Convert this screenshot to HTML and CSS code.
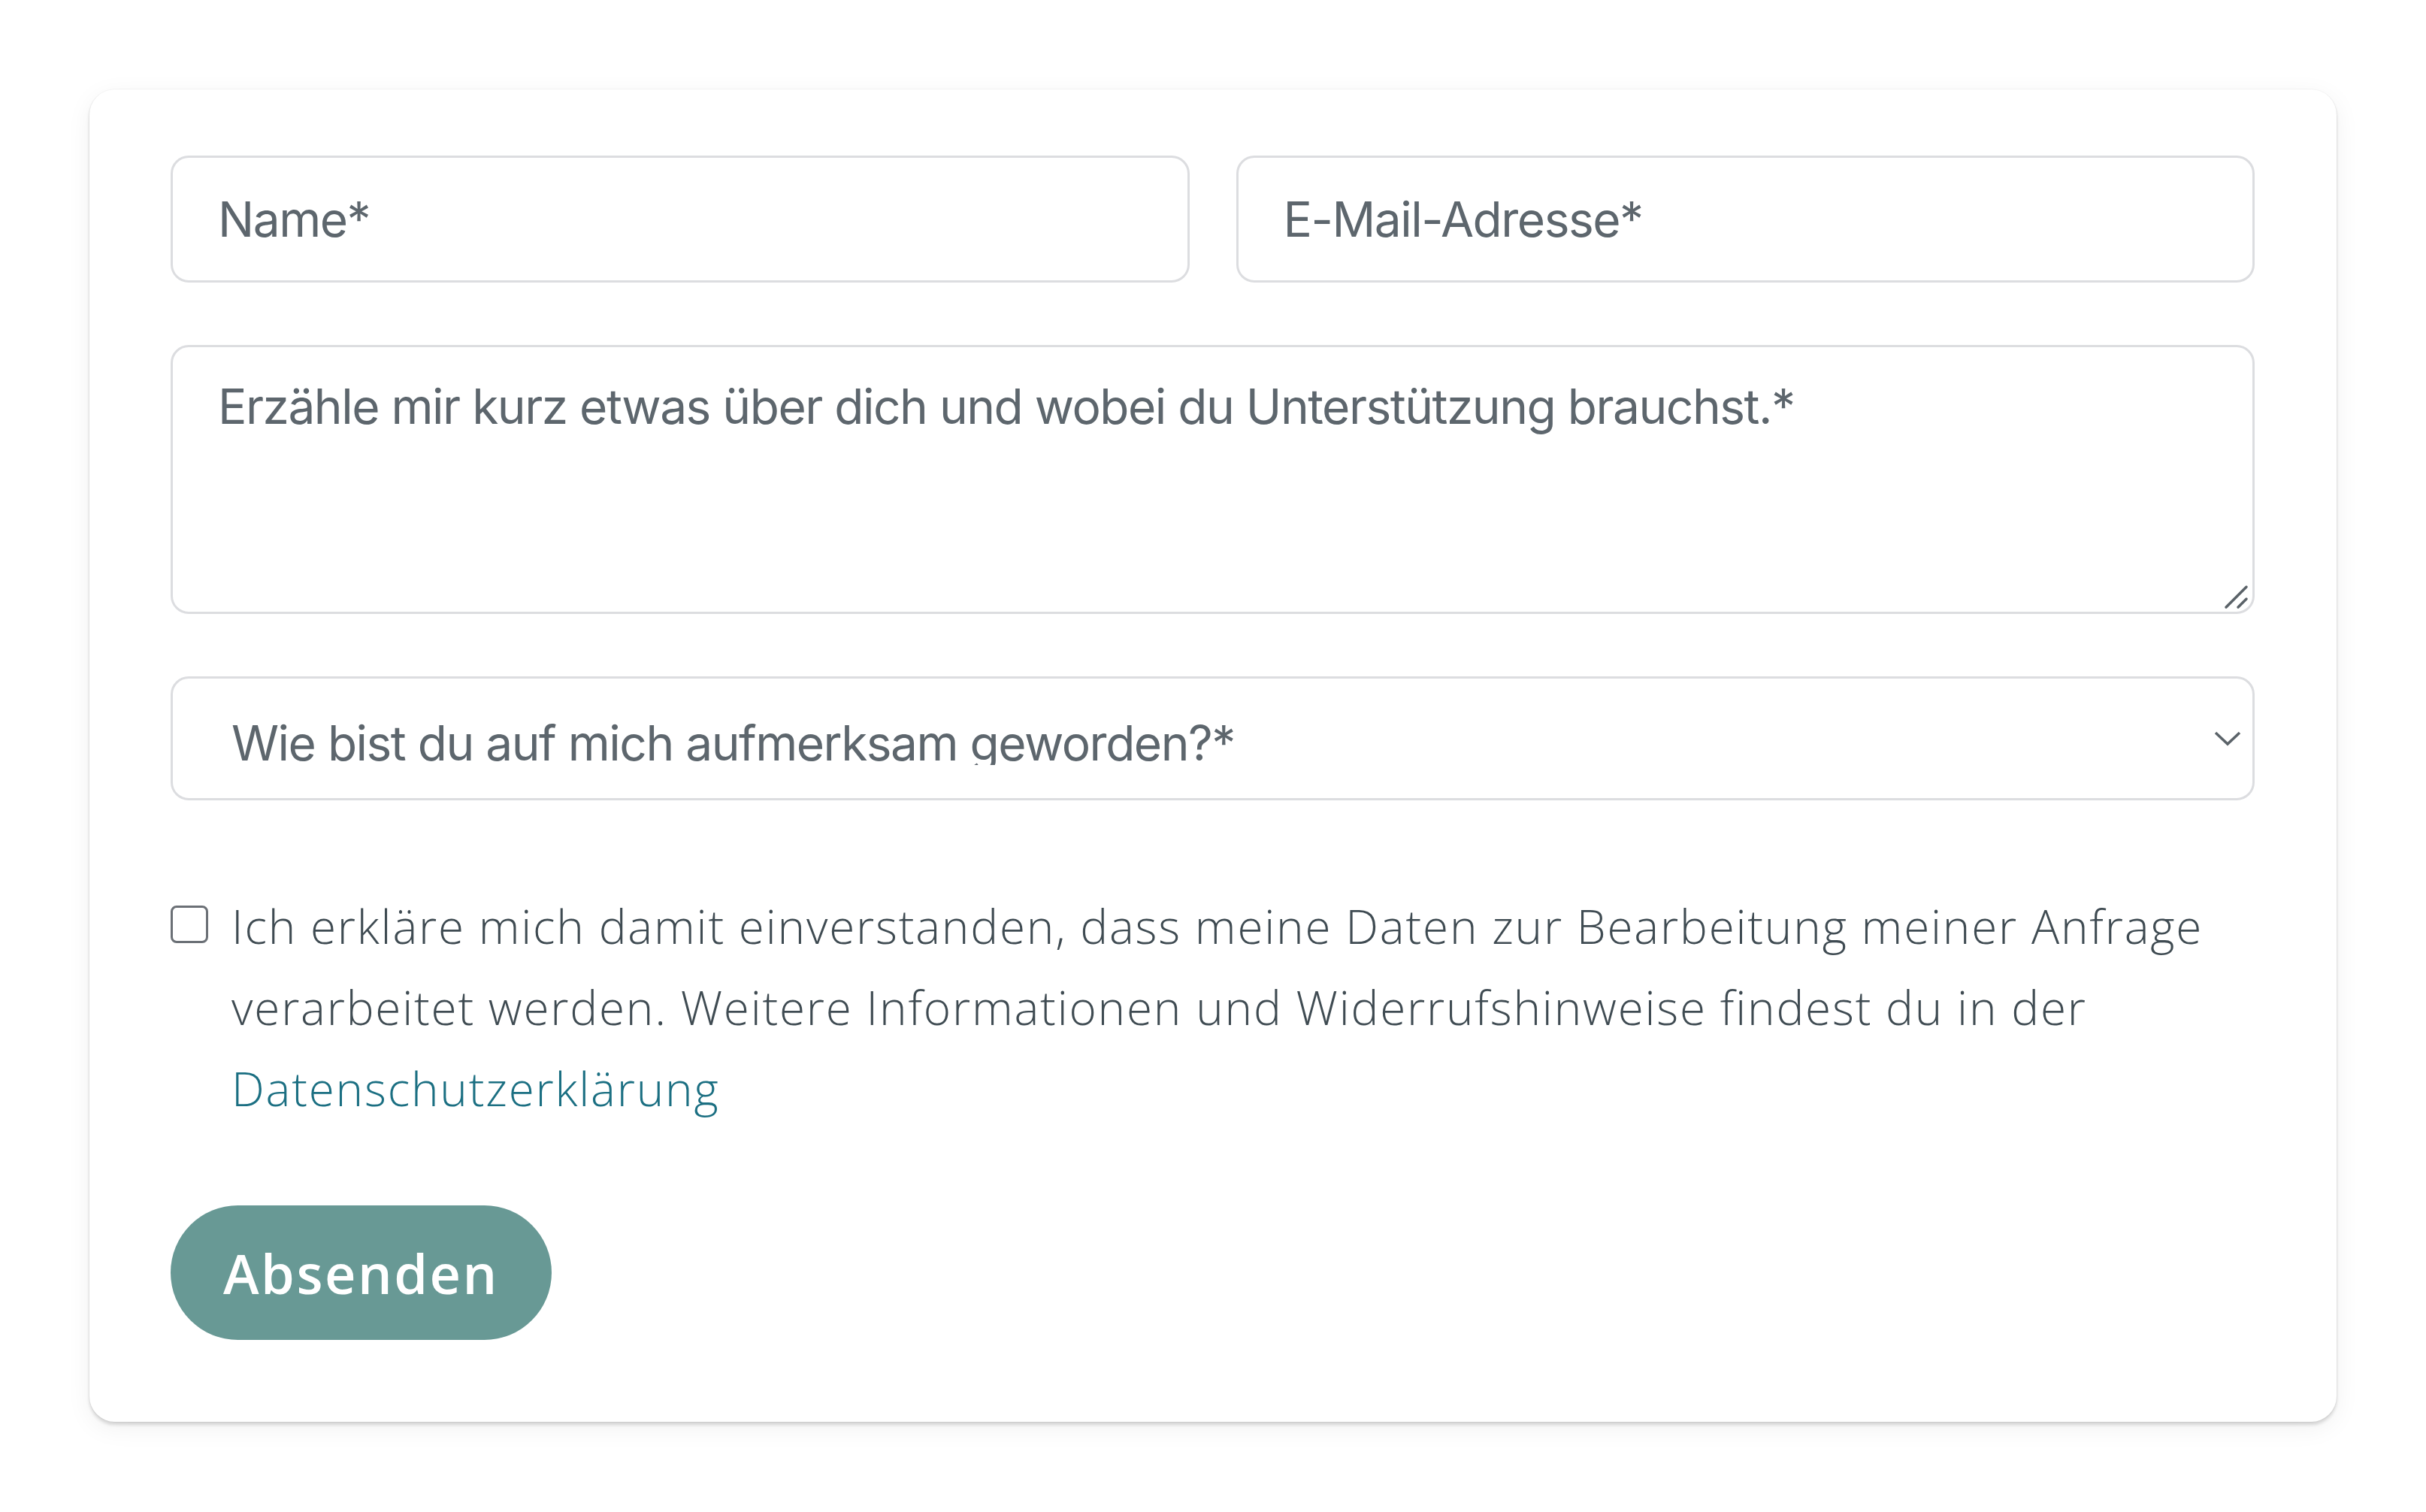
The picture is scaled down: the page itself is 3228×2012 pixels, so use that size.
FILE: index.html
```html
<!DOCTYPE html>
<html lang="de">
<head>
  <meta charset="UTF-8" />
  <meta name="viewport" content="width=device-width, initial-scale=1.0"/>
  <title>Kontakt</title>
  <link rel="stylesheet" href="styles.css">
</head>
<body>
  <form class="card" onsubmit="return false;">
    <div class="row">
      <input class="field" type="text" id="name" placeholder="Name*" />
      <input class="field" type="email" id="email" placeholder="E-Mail-Adresse*" />
    </div>

    <div class="area-wrap">
      <textarea class="field area" id="message" placeholder="Erzähle mir kurz etwas über dich und wobei du Unterstützung brauchst.*"></textarea>
      <svg class="grip" width="34" height="34" viewBox="0 0 34 34">
        <line x1="4" y1="31" x2="31" y2="4" />
        <line x1="20" y1="31" x2="31" y2="20" />
      </svg>
    </div>

    <div class="field select" role="button" tabindex="0">
      <span class="select-label">Wie bist du auf mich aufmerksam geworden?*</span>
      <svg class="chevron" width="36" height="20" viewBox="0 0 36 20">
        <polyline points="2,2 18,17 34,2" />
      </svg>
    </div>

    <label class="consent">
      <input type="checkbox" class="check" />
      <span class="consent-text">Ich erkläre mich damit einverstanden, dass meine Daten zur Bearbeitung meiner Anfrage verarbeitet werden. Weitere Informationen und Widerrufshinweise findest du in der <a href="#">Datenschutzerklärung</a></span>
    </label>

    <button type="submit" class="send">Absenden</button>
  </form>
</body>
</html>
```

FILE: styles.css
```css
:root {
  --field-border: #dcdde0;
  --field-text: #5d666d;
  --body-text: #3f4b52;
  --link: #1b6f82;
  --accent: #689995;
}
* {
  box-sizing: border-box;
}
body {
  margin: 0;
  padding: 119px;
  background: #fff;
  font-family: Inter, "Noto Sans", sans-serif;
}
.card {
  background: #fff;
  border-radius: 34px;
  padding: 88px 109px 109px 108px;
  box-shadow: 0 0 0 1px rgba(0,0,0,0.035), 0 4px 4px rgba(0,0,0,0.14), 0 8px 34px rgba(0,0,0,0.06);
}
.row {
  display: grid;
  grid-template-columns: 1fr 1fr;
  gap: 62px;
  margin-bottom: 83px;
}
.field {
  display: block;
  width: 100%;
  height: 169px;
  margin: 0;
  padding: 0 60px;
  border: 3px solid var(--field-border);
  border-radius: 24px;
  background: #fff;
  font-family: Inter, "Noto Sans", sans-serif;
  font-size: 64px;
  letter-spacing: -1.5px;
  color: var(--field-text);
  outline: none;
}
.field::placeholder {
  color: var(--field-text);
  opacity: 1;
}
.area-wrap {
  position: relative;
  margin-bottom: 83px;
}
.area {
  height: 358px;
  padding-top: 40px;
  line-height: normal;
  resize: none;
}
.grip {
  position: absolute;
  right: 8px;
  bottom: 6px;
  stroke: #5a6268;
  stroke-width: 3.5;
  stroke-linecap: round;
}
.select {
  position: relative;
  height: 165px;
  padding: 47px 80px 0 78px;
  cursor: pointer;
  margin-bottom: 113px;
}
.select-label {
  display: block;
  height: 68px;
  overflow: hidden;
  line-height: 77px;
  white-space: nowrap;
}
.chevron {
  position: absolute;
  right: 15px;
  top: 70px;
  fill: none;
  stroke: #5b6369;
  stroke-width: 3.5;
}
.consent {
  display: flex;
  align-items: flex-start;
  gap: 31px;
  margin-bottom: 102px;
  font-family: "Open Sans", Lato, sans-serif;
  font-weight: 350;
  font-size: 62px;
  letter-spacing: 1.8px;
  line-height: 108px;
  color: var(--body-text);
  cursor: pointer;
}
.check {
  appearance: none;
  flex: none;
  width: 50px;
  height: 50px;
  margin: 27px 0 0;
  border: 3px solid #6b7076;
  border-radius: 8px;
  background: #fff;
}
.consent-text a {
  color: var(--link);
  text-decoration: none;
}
.send {
  display: block;
  height: 179px;
  padding: 0 70px;
  border: none;
  border-radius: 999px;
  background: var(--accent);
  color: #fff;
  font-family: "Open Sans", Lato, sans-serif;
  font-weight: 600;
  font-size: 72px;
  letter-spacing: 2.5px;
  cursor: pointer;
}
```
